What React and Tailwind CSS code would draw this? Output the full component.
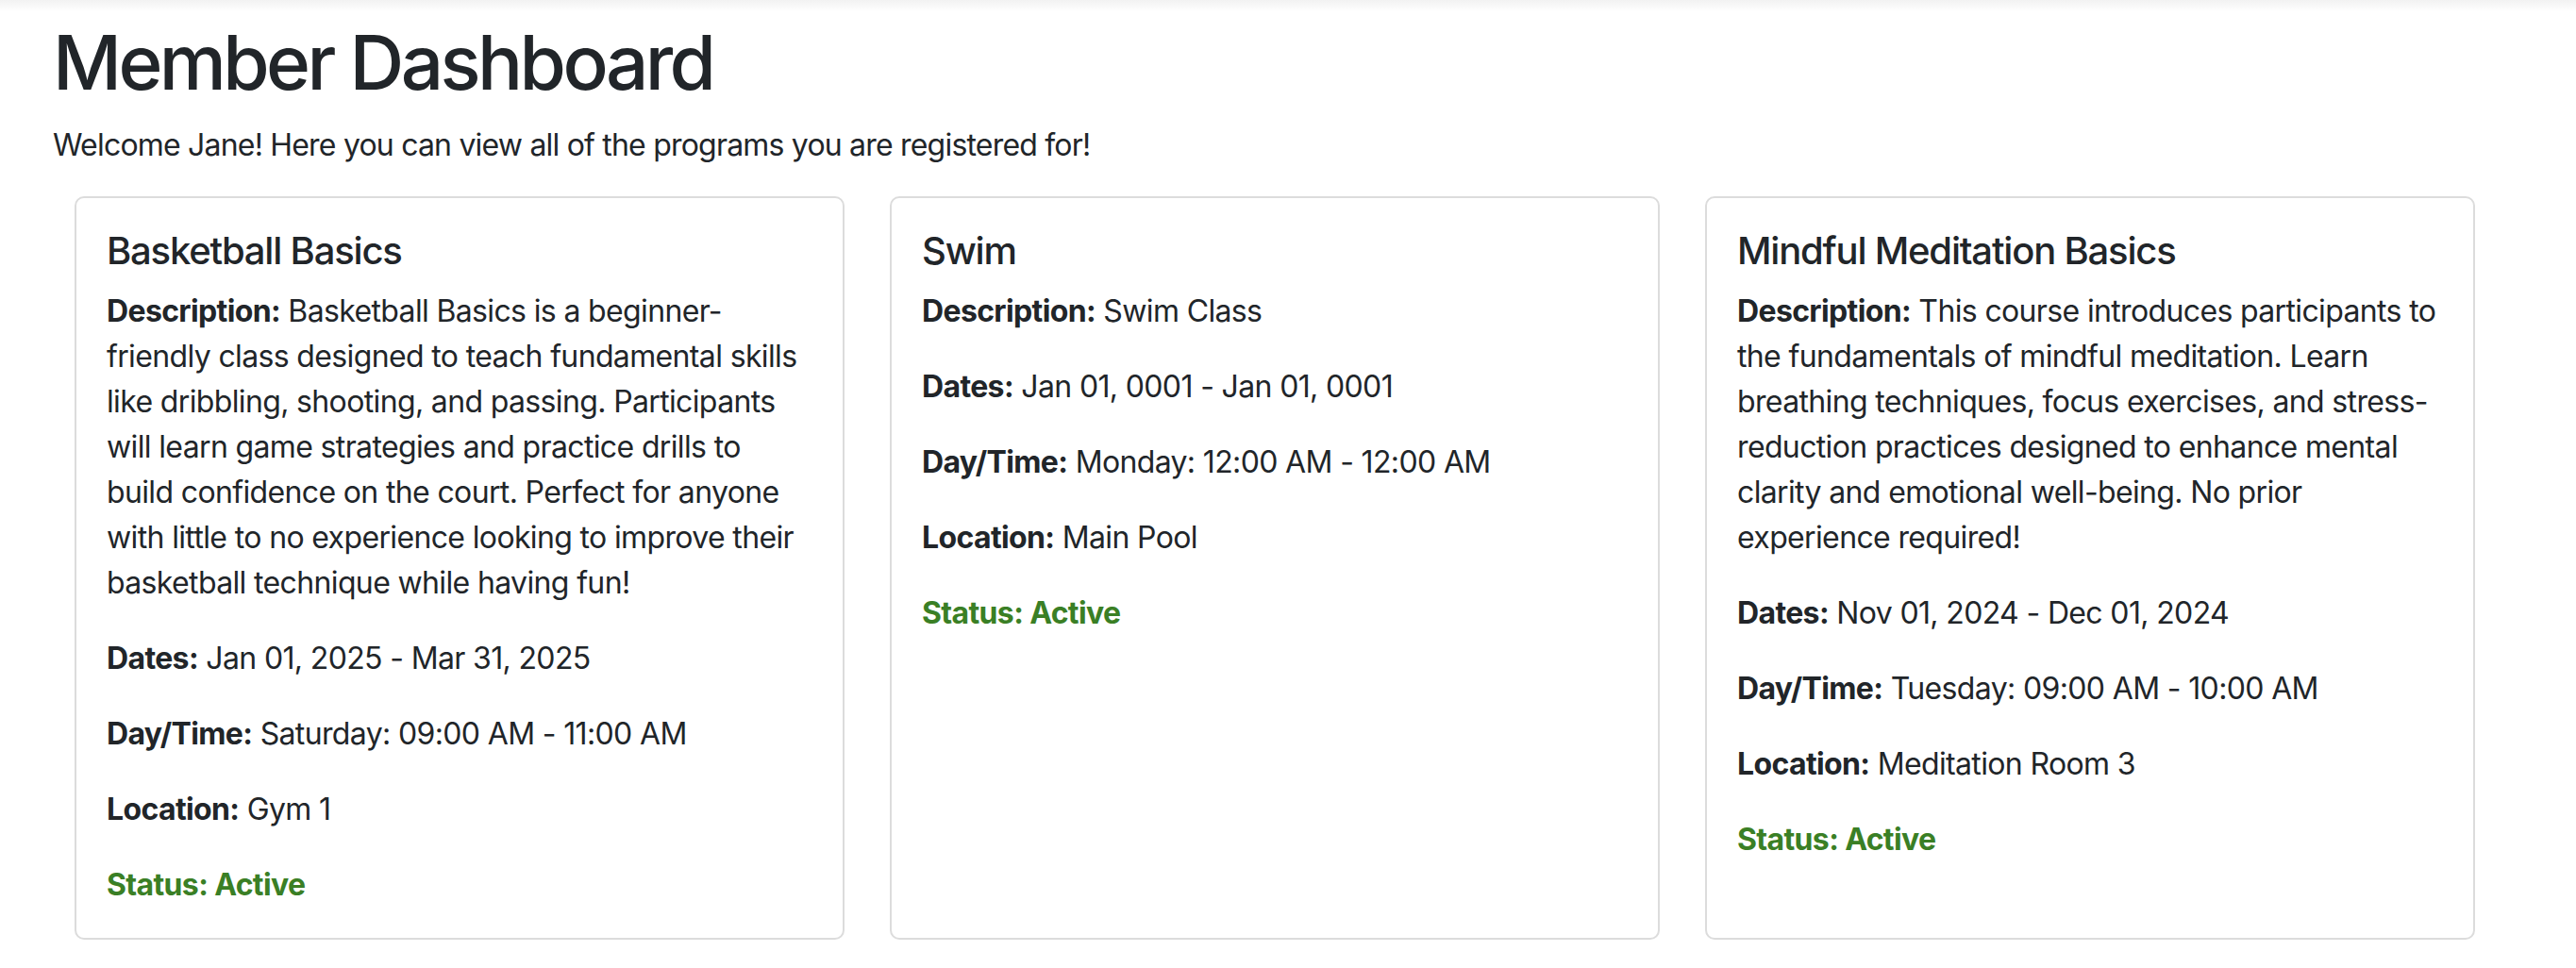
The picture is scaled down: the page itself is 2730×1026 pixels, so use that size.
import React from 'react';

const programs = [
    {
        name: 'Basketball Basics',
        description:
            'Basketball Basics is a beginner-friendly class designed to teach fundamental skills like dribbling, shooting, and passing. Participants will learn game strategies and practice drills to build confidence on the court. Perfect for anyone with little to no experience looking to improve their basketball technique while having fun!',
        dates: 'Jan 01, 2025 - Mar 31, 2025',
        dayTime: 'Saturday: 09:00 AM - 11:00 AM',
        location: 'Gym 1',
        status: 'Active',
    },
    {
        name: 'Swim',
        description: 'Swim Class',
        dates: 'Jan 01, 0001 - Jan 01, 0001',
        dayTime: 'Monday: 12:00 AM - 12:00 AM',
        location: 'Main Pool',
        status: 'Active',
    },
    {
        name: 'Mindful Meditation Basics',
        description:
            'This course introduces participants to the fundamentals of mindful meditation. Learn breathing techniques, focus exercises, and stress-reduction practices designed to enhance mental clarity and emotional well-being. No prior experience required!',
        dates: 'Nov 01, 2024 - Dec 01, 2024',
        dayTime: 'Tuesday: 09:00 AM - 10:00 AM',
        location: 'Meditation Room 3',
        status: 'Active',
    },
];

function ProgramCard({ program }) {
    return (
        <div className="w-[816px] bg-white border-2 border-[#dcdcdc] rounded-[10px] p-[32px] flex flex-col">
            <h5 className="text-[40px] leading-[48px] font-medium tracking-[-0.03em] mb-[16px]">{program.name}</h5>
            <p className="mb-[32px]">
                <strong className="font-bold">Description:</strong> {program.description}
            </p>
            <p className="mb-[32px]">
                <strong className="font-bold">Dates:</strong> {program.dates}
            </p>
            <p className="mb-[32px]">
                <strong className="font-bold">Day/Time:</strong> {program.dayTime}
            </p>
            <p className="mb-[32px]">
                <strong className="font-bold">Location:</strong> {program.location}
            </p>
            <p className="font-bold text-[#3a7f25]">Status: {program.status}</p>
        </div>
    );
}

export default function App() {
    return (
        <div
            className="min-h-screen bg-white text-[#212529] text-[32px] leading-[48px] tracking-[-0.02em]"
            style={{ fontFamily: 'Inter, "Noto Sans", sans-serif' }}
        >
            {/* faint navbar shadow */}
            <div className="h-[12px] bg-gradient-to-b from-[#f2f2f2] to-white" />

            <div className="pl-[56px] pt-[6px]">
                <h1 className="text-[80px] leading-[96px] font-medium tracking-[-0.045em] mb-[16px]">Member Dashboard</h1>
                <p className="mb-[30px] tracking-[-0.025em]">Welcome Jane! Here you can view all of the programs you are registered for!</p>
            </div>

            {/* Program cards */}
            <div className="flex gap-[48px] pl-[79px]">
                {programs.map((p) => (
                    <ProgramCard key={p.name} program={p} />
                ))}
            </div>
        </div>
    );
}
